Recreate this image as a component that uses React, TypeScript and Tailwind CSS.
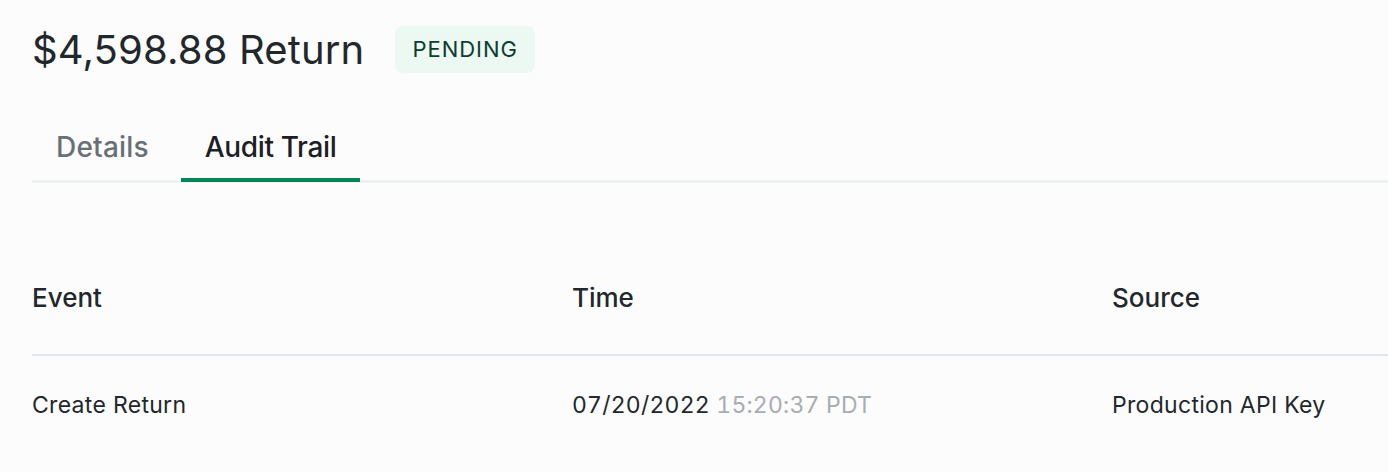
import React from "react";

export default function App() {
  return (
    <div className="min-h-[472px] w-full overflow-hidden bg-[#fcfcfc] pl-8 text-[#22272c]" style={{ fontFamily: "Inter, 'Noto Sans', sans-serif" }}>
      <div className="flex items-center pt-[26px]">
        <h1 className="text-[40px] leading-[47px] font-normal tracking-[0.15px]">$4,598.88 Return</h1>
        <span className="ml-[31px] flex h-[47px] items-center rounded-[8px] bg-[#ecf8f2] px-[17px] text-[22px] tracking-[1px] text-[#0e3d30]">PENDING</span>
      </div>
      <div className="mt-[57px] flex gap-[8px] border-b-[3px] border-[#eef1f1]">
        <div className="-mb-[2px] border-b-4 border-transparent px-6 pb-[14px] text-[28px] leading-[34px] font-medium tracking-[0.2px] text-[#687076]">Details</div>
        <div className="-mb-[2px] border-b-4 border-[#078556] px-6 pb-[14px] text-[28px] leading-[34px] font-medium tracking-[-0.35px] text-[#1c2024]">Audit Trail</div>
      </div>
      <div className="mt-[99px] grid grid-cols-[540px_540px_1fr] border-b-2 border-[#e2e7ec] pb-[40px] text-[26px] leading-[32px] font-medium">
        <div>Event</div>
        <div>Time</div>
        <div>Source</div>
      </div>
      <div className="grid grid-cols-[540px_540px_1fr] pt-[34px] text-[23px] leading-[30px] tracking-[0.3px]">
        <div>Create Return</div>
        <div className="tabular-nums tracking-[0.2px]">
          07/20/2022 <span className="text-[#a8adb2]">15:20:37 PDT</span>
        </div>
        <div>Production API Key</div>
      </div>
    </div>
  );
}
